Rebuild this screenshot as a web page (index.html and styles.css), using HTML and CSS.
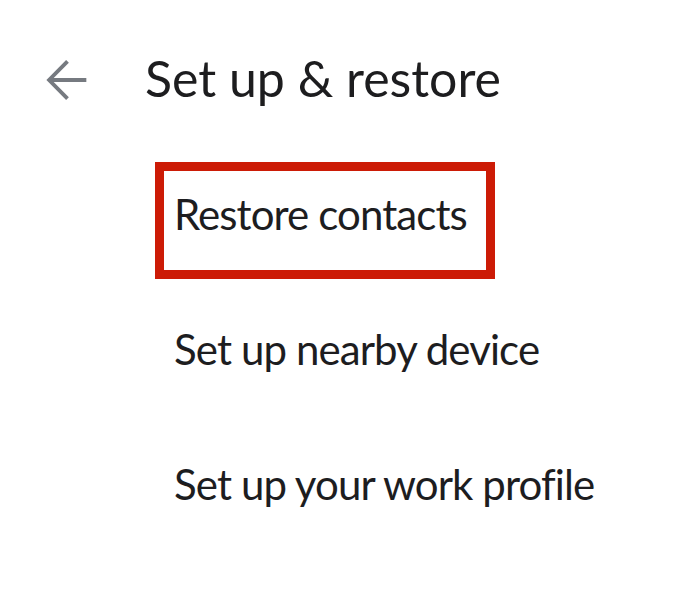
FILE: index.html
```html
<!DOCTYPE html>
<html lang="en">
<head>
   <meta charset="UTF-8">
   <meta name="viewport" content="width=device-width, initial-scale=1.0">
   <link rel="stylesheet" href="styles.css">
</head>
<body>
   <div class="screen">
      <div class="top-bar">
         <span class="back-btn">
            <svg viewBox="0 0 24 24" width="58" height="58">
               <path d="M20 12H4.6" fill="none" stroke="#767a80" stroke-width="1.6"/>
               <path d="M12.2 4.3L4.6 12l7.6 7.7" fill="none" stroke="#767a80" stroke-width="1.6"/>
            </svg>
         </span>
         <h1 class="title">Set up &amp; restore</h1>
      </div>
      <ul class="menu">
         <li class="menu-item highlighted">Restore contacts</li>
         <li class="menu-item">Set up nearby device</li>
         <li class="menu-item">Set up your work profile</li>
      </ul>
   </div>
</body>
</html>
```

FILE: styles.css
```css
body {
   margin: 0;
   background-color: #fff;
   font-family: Lato, Roboto, sans-serif;
   color: #1d1d1f;
}
.screen {
   padding-top: 51px;
}
.top-bar {
   display: flex;
   align-items: center;
   height: 58px;
   padding-left: 38px;
}
.back-btn {
   display: flex;
   width: 58px;
   height: 58px;
   margin-right: 49px;
}
.title {
   margin: 0 0 4px;
   font-size: 50px;
   font-weight: 400;
   line-height: 58px;
}
.menu {
   list-style: none;
   margin: 53px 0 0 155px;
   padding: 0;
}
.menu-item {
   display: inline-block;
   box-sizing: border-box;
   height: 117px;
   padding: 0 19px 6px 10px;
   border: 9px solid transparent;
   font-size: 42px;
   letter-spacing: -0.9px;
   line-height: 86px;
   margin-bottom: 18px;
}
.highlighted {
   border-color: #cc1b06;
}
```
